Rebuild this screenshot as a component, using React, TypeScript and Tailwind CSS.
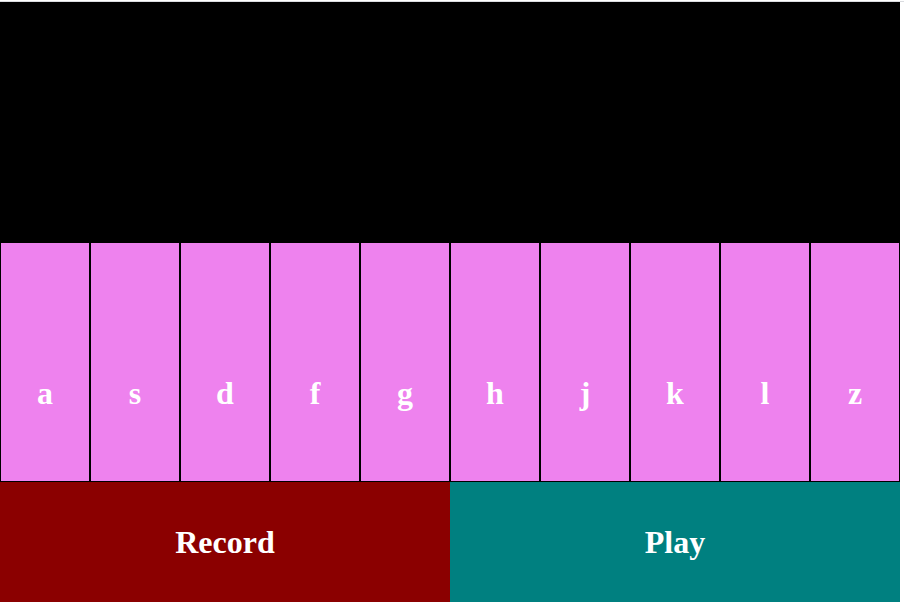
import React, { useState } from "react";

const KEYS: string[] = ["a", "s", "d", "f", "g", "h", "j", "k", "l", "z"];

function PianoKey({ note }: { note: string }) {
  return (
    <button
      type="button"
      className="flex items-end justify-center border border-black bg-[#ee82ee] pb-[70px] active:bg-[#da70d6]"
    >
      {note}
    </button>
  );
}

export default function App() {
  const [recording, setRecording] = useState<boolean>(false);

  return (
    <div className="flex h-screen flex-col bg-white pb-0.5 font-['Liberation_Serif',serif] text-[32px] leading-9 font-bold text-white">
      <div className="mt-px h-px shrink-0 bg-[#dadce0]" />
      <main className="mr-1 grid grow grid-rows-[2fr_2fr_1fr]">
        <div className="bg-black" />
        <div className="grid grid-cols-10">
          {KEYS.map((note) => (
            <PianoKey key={note} note={note} />
          ))}
        </div>
        <div className="grid grid-cols-2">
          <button
            type="button"
            aria-pressed={recording}
            onClick={() => setRecording(!recording)}
            className="bg-[#8b0000]"
          >
            Record
          </button>
          <button type="button" className="bg-[#008080]">
            Play
          </button>
        </div>
      </main>
    </div>
  );
}
